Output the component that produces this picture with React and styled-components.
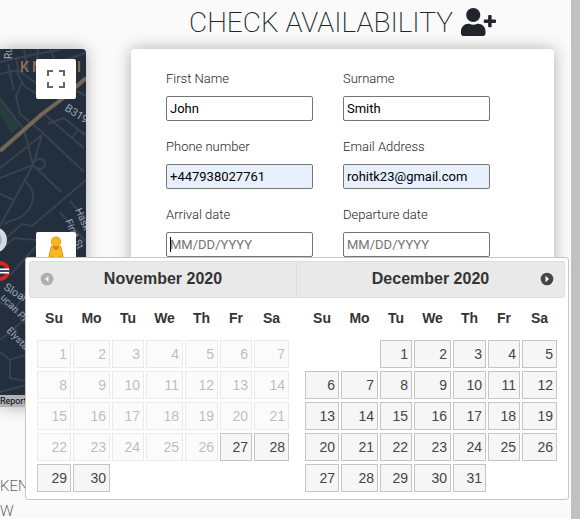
import React from "react";
import styled, { createGlobalStyle } from "styled-components";

const Global = createGlobalStyle`
  * { box-sizing: border-box; }
  body { margin: 0; background: #fafafa; color: #212529; font-family: Roboto, "Liberation Sans", sans-serif; overflow: hidden; }
`;

const Page = styled.div`
  display: grid;
  grid-template-columns: 86px minmax(0, 1fr) 9px;
  column-gap: 17px;
  height: 100vh;
  overflow: hidden;
`;

const MapColumn = styled.aside`
  padding-top: 49px;
`;

const MapPanel = styled.div`
  position: relative;
  height: 358px;
  border-radius: 0 4px 4px 0;
  box-shadow: 0 0 16px rgba(0, 0, 0, 0.3);
`;

const MapArt = styled.svg`
  display: block;
  width: 100%;
  height: 100%;
  border-radius: 0 4px 4px 0;
  font-family: Roboto, "Liberation Sans", sans-serif;
`;

const MapButton = styled.button`
  position: absolute;
  right: 10px;
  top: ${(p) => p.$top};
  width: 40px;
  height: 40px;
  padding: 0;
  display: grid;
  place-items: center;
  border: 0;
  border-radius: 2px;
  background: #fff;
`;

const MapCredit = styled.a`
  position: absolute;
  left: 0;
  right: 0;
  bottom: 0;
  background: #b0b3b9;
  color: #000;
  font-size: 9px;
  line-height: 12px;
  text-decoration: none;
  white-space: nowrap;
`;

const Address = styled.p`
  margin: 67px 0 0;
  font-size: 15px;
  font-weight: 200;
  line-height: 25px;
`;

const Booking = styled.main`
  margin-left: 28px;
`;

const Title = styled.h1`
  display: flex;
  align-items: center;
  justify-content: center;
  gap: 8px;
  height: 49px;
  margin: 0;
  padding-bottom: 5px;
  font-size: 28px;
  font-weight: 200;
  white-space: nowrap;
`;

const Card = styled.form`
  display: grid;
  grid-template-columns: repeat(2, 147px);
  gap: 16px 30px;
  align-content: start;
  padding: 20px 35px;
  border-radius: 4px;
  background: #fff;
  box-shadow: 0 0 16px rgba(0, 0, 0, 0.3);
`;

const Field = styled.label`
  display: grid;
  gap: 7px;
  font-size: 13px;
  font-weight: 300;
  line-height: 20px;
`;

const TextBox = styled.input`
  width: 100%;
  height: 25px;
  padding: 1px 3px;
  border: 1px solid #767676;
  border-radius: 2px;
  outline: 0;
  background: ${(p) => (p.$filled ? "#e8f0fe" : "#fff")};
  color: #000;
  font: 13px Roboto, "Liberation Sans", sans-serif;
  &::placeholder { color: #757575; }
  &:focus {
    caret-color: transparent;
    background: linear-gradient(#000, #000) 3px center / 1px 15px no-repeat #fff;
  }
`;

const ScrollStrip = styled.div`
  background: #c1c1c1;
`;

const Picker = styled.section`
  position: absolute;
  left: 25px;
  top: 257px;
  display: grid;
  grid-template-columns: 1fr 1fr;
  padding: 3px 3px 6px;
  width: 544px;
  border: 1px solid #c5c5c5;
  border-radius: 3px;
  background: #fff;
  color: #333;
  font-family: "Liberation Sans", Arial, sans-serif;
`;

const MonthHeader = styled.header`
  display: grid;
  grid-template-columns: 18px 1fr 18px;
  align-items: center;
  height: 37px;
  padding: 0 8px 2px;
  border: 1px solid #ddd;
  border-radius: ${(p) => (p.$last ? "0 3px 3px 0" : "3px 0 0 3px")};
  ${(p) => (p.$last ? "border-left: 0;" : "")}
  background: #e9e9e9;
`;

const MonthName = styled.h2`
  grid-column: 2;
  margin: 0;
  font-size: 16px;
  line-height: 20px;
  text-align: center;
`;

const NavButton = styled.button`
  grid-row: 1;
  grid-column: ${(p) => (p.$next ? 3 : 1)};
  width: 18px;
  height: 18px;
  padding: 0;
  display: grid;
  place-items: center;
  border: 0;
  background: none;
  opacity: ${(p) => (p.disabled ? 0.35 : 1)};
`;

const Days = styled.table`
  width: 254px;
  margin: 0 7px;
  border-collapse: collapse;
  table-layout: fixed;
  font-size: 14px;
`;

const Weekday = styled.th`
  height: 40px;
  padding: 0;
  line-height: 16px;
`;

const Day = styled.td`
  height: 31px;
  padding: 1px;
`;

const DayButton = styled.button`
  display: block;
  width: 100%;
  height: 28px;
  padding: 0 3px;
  border: 1px solid #c5c5c5;
  background: #f6f6f6;
  color: #454545;
  font: 14px "Liberation Sans", Arial, sans-serif;
  text-align: right;
  &:disabled { opacity: 0.35; }
`;

const weekdays = ["Su", "Mo", "Tu", "We", "Th", "Fr", "Sa"];
const columnWidths = [36, 39, 34, 39, 35, 34, 37];

function Month({ name, first, count, openFrom, last }) {
  const weeks = Array.from({ length: Math.ceil((first + count) / 7) }, (_, w) =>
    weekdays.map((_, d) => w * 7 + d - first + 1)
  );
  return (
    <div>
      <MonthHeader $last={last}>
        <NavButton type="button" $next={last} disabled={!last} aria-label={last ? "Next" : "Prev"}>
          <svg width="14" height="14" viewBox="0 0 14 14">
            <circle cx="7" cy="7" r="6.3" fill="#444" />
            <path d={last ? "M5.5 3.8 9 7l-3.500 3.200z" : "M8.500 3.800 5 7l3.500 3.200z"} fill="#fff" />
          </svg>
        </NavButton>
        <MonthName>{name}</MonthName>
      </MonthHeader>
      <Days aria-label={name}>
        <colgroup>
          {columnWidths.map((w, i) => <col key={i} width={w} />)}
        </colgroup>
        <thead>
          <tr>{weekdays.map((d) => <Weekday key={d} scope="col">{d}</Weekday>)}</tr>
        </thead>
        <tbody>
          {weeks.map((week, w) => (
            <tr key={w}>
              {week.map((n, d) => (
                <Day key={d}>
                  {n > 0 && n <= count && <DayButton type="button" disabled={n < openFrom}>{n}</DayButton>}
                </Day>
              ))}
            </tr>
          ))}
        </tbody>
      </Days>
    </div>
  );
}

function StreetMap() {
  return (
    <MapArt viewBox="0 49 86 358" preserveAspectRatio="xMinYMin slice" aria-hidden="true">
      <rect y="49" width="86" height="358" fill="#242f3e" />
      <path d="M0 98 20 126 12 134 0 116z" fill="#263c3f" />
      <g fill="none" stroke="#38414e" strokeWidth="2">
        <path d="M0 62 36 54 60 50M0 74l18-4 22 16 16-10M8 64l6 26M18 70 16 58M24 50l4 20M38 49l-2 22M50 49l6 14 30-10M60 82l26 14M16 70l8 16 16 10M22 82l-6 14 4 18 22 18 42 40M0 98l24 32 9 35M42 112l16 14 26 22M48 124l16-6 22 18M72 138l6-8 8 4" />
        <path d="M0 168 42 135M0 178l33-13 28 27M42 135 33 165 14 200 0 226M33 165c2-10 14-6 12 0s-8 4-12 0M25 181c16 14 6 36-15 40l-6 3M0 194l14 6M4 240l18-16 10 2 54-46M60 212l26 30M70 201l16 18" />
        <path d="M0 250 14 238 36 240M10 275 42 240M0 302 14 310 28 290M14 310l16 20M0 340l24-20 16 22M0 352l10 8 18-6M10 360v18l20 4M0 392l30-8" />
      </g>
      <path d="M0 151 42 114 62 99 86 78" fill="none" stroke="#746855" strokeWidth="4" />
      <g fill="#d59563" opacity=".62" fontSize="14" fontWeight="500">
        <text x="20" y="72">K</text><text x="32" y="72">N</text><text x="77" y="72">I</text>
      </g>
      <g fill="#9ca5b3" fontSize="10">
        <text transform="translate(12 59) rotate(-90)">Ru</text>
        <text transform="translate(64 110) rotate(32)" fontSize="11">B319</text>
        <text transform="translate(75 210) rotate(66)">Hask</text>
        <text transform="translate(65 221) rotate(66)">First St</text>
        <text transform="translate(3 289) rotate(32)" fontSize="11">Sloane</text>
        <text transform="translate(0 298) rotate(46)">ucan Pl</text>
        <text transform="translate(6 331) rotate(46)">Elystan St</text>
      </g>
      <circle cx="-6" cy="240" r="13" fill="#d4dae3" />
      <circle cx="-6" cy="240" r="8" fill="#aab2bd" />
      <circle cx="0" cy="271" r="8" fill="none" stroke="#dc241f" strokeWidth="4" />
      <path d="M0 271h9" stroke="#fff" strokeWidth="5" />
      <path d="M0 271h9" stroke="#2b4a8b" strokeWidth="2" />
    </MapArt>
  );
}

const fields = [
  ["First Name", "text", "John", false],
  ["Surname", "text", "Smith", false],
  ["Phone number", "tel", "+447938027761", true],
  ["Email Address", "email", "rohitk23@gmail.com", true],
  ["Arrival date", "text", "", false],
  ["Departure date", "text", "", false],
];

export default function App() {
  return (
    <>
      <Global />
      <Page>
        <MapColumn>
          <MapPanel>
            <StreetMap />
            <MapButton type="button" $top="10px" aria-label="Toggle fullscreen view">
              <svg width="18" height="18" viewBox="0 0 18 18" fill="#666">
                <path d="M0 0v6h2V2h4V0zM12 0v2h4v4h2V0zM16 16h-4v2h6v-6h-2zM2 12H0v6h6v-2H2z" />
              </svg>
            </MapButton>
            <MapButton type="button" $top="183px" aria-label="Street View">
              <svg width="20" height="32" viewBox="0 0 20 34">
                <path d="M5 11h10l3 13-3 1-1-4-1 12H7L6 21l-1 4-3-1z" fill="#fbb917" stroke="#d78b16" />
                <path d="M6 11h8l-4 5z" fill="#e07a25" />
                <circle cx="10" cy="6" r="5" fill="#fbb917" stroke="#d99a1b" />
              </svg>
            </MapButton>
            <MapCredit href="#report">Report a map error</MapCredit>
          </MapPanel>
          <Address>KEN<br />W</Address>
        </MapColumn>
        <Booking>
          <Title>
            CHECK AVAILABILITY
            <svg width="35" height="28" viewBox="0 0 640 512" fill="#212529" aria-hidden="true">
              <path d="M624 208h-64v-64c0-8.800-7.200-16-16-16h-32c-8.800 0-16 7.200-16 16v64h-64c-8.800 0-16 7.200-16 16v32c0 8.800 7.200 16 16 16h64v64c0 8.800 7.200 16 16 16h32c8.800 0 16-7.200 16-16v-64h64c8.800 0 16-7.200 16-16v-32c0-8.800-7.200-16-16-16zm-400 48c70.700 0 128-57.300 128-128S294.700 0 224 0 96 57.300 96 128s57.300 128 128 128zm89.600 32h-16.700c-22.200 10.200-46.900 16-72.900 16s-50.600-5.800-72.900-16h-16.700C60.200 288 0 348.200 0 422.400V464c0 26.500 21.500 48 48 48h352c26.500 0 48-21.500 48-48v-41.600c0-74.200-60.200-134.400-134.400-134.400z" />
            </svg>
          </Title>
          <Card>
            {fields.map(([label, type, value, filled]) => (
              <Field key={label}>
                {label}
                <TextBox
                  type={type}
                  defaultValue={value}
                  $filled={filled}
                  placeholder={label.endsWith("date") ? "MM/DD/YYYY" : undefined}
                  autoFocus={label === "Arrival date"}
                />
              </Field>
            ))}
          </Card>
        </Booking>
        <ScrollStrip />
      </Page>
      <Picker aria-label="Choose dates">
        <Month name="November 2020" first={0} count={30} openFrom={27} />
        <Month name="December 2020" first={2} count={31} openFrom={1} last />
      </Picker>
    </>
  );
}
